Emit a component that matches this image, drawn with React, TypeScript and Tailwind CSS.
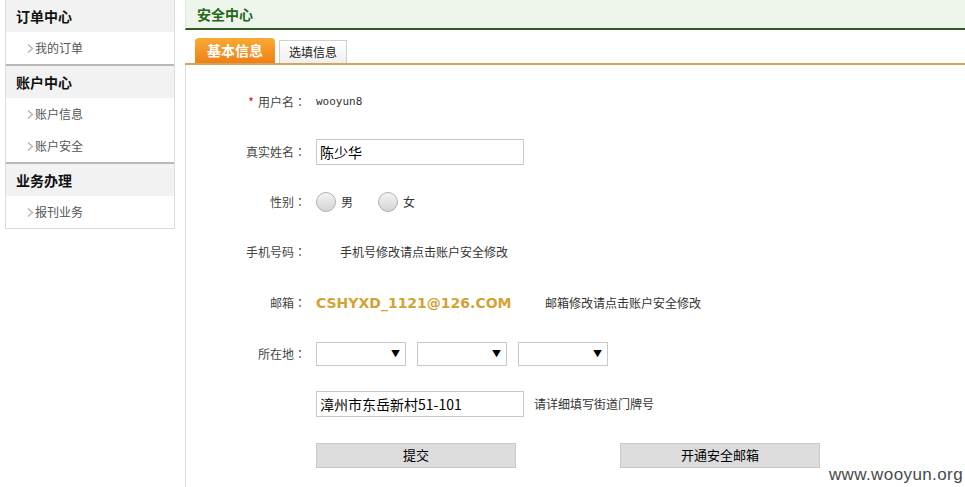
import React from "react";

const cjk = { fontFamily: '"Noto Sans CJK SC", "Noto Sans", sans-serif' };

function Arrow() {
  return (
    <svg width="7" height="9" viewBox="0 0 7 9" className="mr-[1px]">
      <path d="M1 0.5 L5.5 4.5 L1 8.5" fill="none" stroke="#b5b5b5" strokeWidth="1.4" />
    </svg>
  );
}

function SideHeader({ children }: { children: React.ReactNode }) {
  return (
    <div className="h-8 bg-[#f2f2f2] flex items-center pl-[10px] text-[14px] font-bold text-[#111]">
      {children}
    </div>
  );
}

function SideItem({ children }: { children: React.ReactNode }) {
  return (
    <div className="h-8 bg-white flex items-center pl-[21px] text-[12px] text-[#555]">
      <Arrow />
      {children}
    </div>
  );
}

function Colon() {
  return <span style={{ fontFamily: '"Noto Sans CJK TC", sans-serif' }}>：</span>;
}

function Row({ label, star, children, h = "h-[50px]" }: { label?: string; star?: boolean; children: React.ReactNode; h?: string }) {
  return (
    <div className={`flex items-center ${h}`}>
      <div className="w-[120px] shrink-0 text-right text-[12px] text-[#444]">
        {star && <span className="text-[#d00] mr-[4px] text-[12px]">*</span>}
        {label}
        {label ? <Colon /> : null}
      </div>
      <div className="ml-[10px] flex items-center">{children}</div>
    </div>
  );
}

function Radio({ label }: { label: string }) {
  return (
    <div className="flex items-center mr-[25px]">
      <span className="w-[20px] h-[20px] rounded-full border border-[#b0b0b0] bg-gradient-to-b from-[#f4f4f4] to-[#d4d4d4]" />
      <span className="ml-[5px] text-[12px] text-[#333]">{label}</span>
    </div>
  );
}

function Select() {
  return (
    <div className="w-[90px] h-[24px] border border-[#c8c8c8] bg-white flex items-center justify-end pr-[5px] mr-[11px]">
      <span className="text-[9px] text-black">▼</span>
    </div>
  );
}

export default function App() {
  return (
    <div className="w-[965px] h-[487px] bg-white relative overflow-hidden flex" style={cjk}>
      {/* sidebar */}
      <div className="ml-[5px] w-[170px] self-start border-x border-b border-[#dcdcdc]">
        <SideHeader>订单中心</SideHeader>
        <SideItem>我的订单</SideItem>
        <div className="h-[2px] bg-[#b8b8b8]" />
        <SideHeader>账户中心</SideHeader>
        <SideItem>账户信息</SideItem>
        <SideItem>账户安全</SideItem>
        <div className="h-[2px] bg-[#b8b8b8]" />
        <SideHeader>业务办理</SideHeader>
        <SideItem>报刊业务</SideItem>
      </div>

      {/* main */}
      <div className="ml-[10px] flex-1 flex flex-col">
        <div className="h-[30px] bg-[#eef5eb] border-b-2 border-[#2d5e20] flex items-center pl-[11px] text-[14px] font-bold text-[#24671a] border-l border-l-[#e0e6de]">
          安全中心
        </div>
        <div className="h-[8px]" />
        <div className="h-[27px] flex items-end pl-[10px] border-b-2 border-[#d2a55c]">
          <div className="w-[80px] h-[25px] rounded-t-[4px] bg-gradient-to-b from-[#f9aa35] to-[#ef7f14] text-white font-bold text-[14px] flex items-center justify-center">
            基本信息
          </div>
          <div className="ml-[4px] w-[68px] h-[23px] border border-b-0 border-[#cfcfcf] bg-gradient-to-b from-white to-[#efefef] text-[12px] text-[#222] flex items-center justify-center">
            选填信息
          </div>
        </div>
        <div className="flex-1 border-l border-[#dcdcdc] pt-[12px]">
          <Row label="用户名" star>
            <span className="text-[11px] text-[#333]" style={{ fontFamily: '"DejaVu Sans Mono", monospace' }}>wooyun8</span>
          </Row>
          <Row label="真实姓名">
            <div className="w-[208px] h-[26px] border border-[#c8c8c8] flex items-center pl-[3px] text-[14px] text-black">陈少华</div>
          </Row>
          <Row label="性别">
            <Radio label="男" />
            <Radio label="女" />
          </Row>
          <Row label="手机号码">
            <span className="ml-[24px] text-[12px] text-[#333]">手机号修改请点击账户安全修改</span>
          </Row>
          <Row label="邮箱" h="h-[52px]">
            <span className="text-[14px] font-bold text-[#d4a233] w-[229px]" style={{ fontFamily: 'Verdana, "DejaVu Sans", sans-serif' }}>
              CSHYXD_1121@126.COM
            </span>
            <span className="text-[12px] text-[#333]">邮箱修改请点击账户安全修改</span>
          </Row>
          <Row label="所在地" h="h-[50px]">
            <Select />
            <Select />
            <Select />
          </Row>
          <Row label="" h="h-[50px]">
            <div className="w-[208px] h-[26px] border border-[#c8c8c8] flex items-center pl-[3px] text-[14px] text-black">漳州市东岳新村51-101</div>
            <span className="ml-[10px] text-[12px] text-[#333]">请详细填写街道门牌号</span>
          </Row>
          <Row label="" h="h-[52px]">
            <div className="w-[200px] h-[25px] border border-[#c8c8c8] bg-[#dcdcdc] flex items-center justify-center text-[13px] text-black">提交</div>
            <div className="ml-[104px] w-[200px] h-[25px] border border-[#c8c8c8] bg-[#dcdcdc] flex items-center justify-center text-[13px] text-black">开通安全邮箱</div>
          </Row>
        </div>
      </div>

      <div className="absolute right-[2px] bottom-[0px] text-[17px] text-[#4a4a4a] tracking-[0.4px]" style={{ fontFamily: '"Liberation Sans", Arial, sans-serif' }}>
        www.wooyun.org
      </div>
    </div>
  );
}
